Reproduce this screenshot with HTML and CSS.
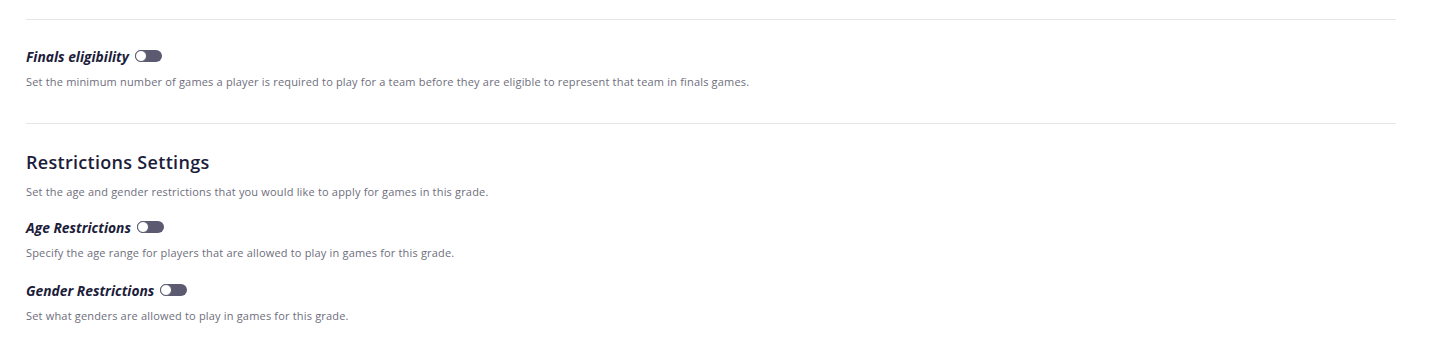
FILE: index.html
```html
<!DOCTYPE html>
<html lang="en">
<head>
    <meta charset="UTF-8">
    <meta name="viewport" content="width=device-width, initial-scale=1.0">
    <title>Grade settings</title>
    <link rel="stylesheet" href="styles.css">
</head>
<body>
<div class="settings">
    <hr class="divider">

    <div class="option option-first">
        <div class="option-label">
            <span>Finals eligibility</span>
            <label class="toggle"><input type="checkbox"><span class="knob"></span></label>
        </div>
        <p class="hint">Set the minimum number of games a player is required to play for a team before they are eligible to represent that team in finals games.</p>
    </div>

    <hr class="divider">

    <h2 class="section-title">Restrictions Settings</h2>
    <p class="hint">Set the age and gender restrictions that you would like to apply for games in this grade.</p>

    <div class="option">
        <div class="option-label">
            <span>Age Restrictions</span>
            <label class="toggle"><input type="checkbox"><span class="knob"></span></label>
        </div>
        <p class="hint">Specify the age range for players that are allowed to play in games for this grade.</p>
    </div>

    <div class="option">
        <div class="option-label">
            <span>Gender Restrictions</span>
            <label class="toggle"><input type="checkbox"><span class="knob"></span></label>
        </div>
        <p class="hint">Set what genders are allowed to play in games for this grade.</p>
    </div>
</div>
</body>
</html>
```

FILE: styles.css
```css
:root {
    --text-dark: #1c1d3a;
    --text-muted: #6e6e7c;
    --line: #e6e6ea;
    --toggle-bg: #5b5a70;
}

body {
    margin: 0;
    background: #fff;
    font-family: 'Open Sans', 'Lato', sans-serif;
    color: var(--text-dark);
}

.settings {
    padding: 19px 44px 0 26px;
}

.divider {
    border: none;
    border-top: 1px solid var(--line);
    margin: 0;
}

.option {
    margin-bottom: 20px;
}

.option-first {
    margin-top: 26px;
    margin-bottom: 34px;
}

.option-label {
    display: flex;
    align-items: center;
    gap: 6px;
    font-size: 13.8px;
    font-weight: 700;
    font-style: italic;
    height: 20px;
}

.hint {
    margin: 9px 0 0;
    font-size: 11px;
    line-height: 14px;
    letter-spacing: 0.18px;
    color: var(--text-muted);
}

.section-title {
    margin: 27px 0 0;
    font-size: 18px;
    font-weight: 600;
    line-height: 22px;
    letter-spacing: 0.3px;
}

.section-title + .hint {
    margin-top: 12px;
    margin-bottom: 18px;
}

.toggle {
    position: relative;
    display: inline-block;
    width: 27px;
    height: 12px;
}

.toggle input {
    display: none;
}

.knob {
    position: absolute;
    inset: 0;
    background: var(--toggle-bg);
    border-radius: 6px;
    cursor: pointer;
}

.knob::before {
    content: "";
    position: absolute;
    left: 0;
    top: 0;
    width: 10px;
    height: 10px;
    border: 1px solid var(--toggle-bg);
    border-radius: 50%;
    background: #fff;
}
```
